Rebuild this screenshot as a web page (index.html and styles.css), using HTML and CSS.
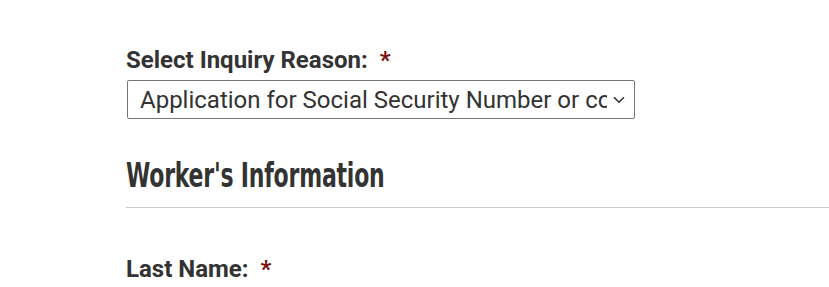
FILE: index.html
```html
<!DOCTYPE html>
<html>
<head>
<meta charset="utf-8">
<link rel="stylesheet" href="styles.css">
</head>
<body>
<div class="page">
  <div class="field">
    <label class="label">Select Inquiry Reason:<span class="req">*</span></label>
    <div class="select">
      <span class="select-text">Application for Social Security Number or co</span>
      <svg class="chev" width="12" height="8" viewBox="0 0 12 8"><path d="M1 1.2 L6 6.2 L11 1.2" fill="none" stroke="#333" stroke-width="1.6"/></svg>
    </div>
  </div>
  <h2 class="section"><span class="section-text">Worker's Information</span></h2>
  <div class="field last">
    <label class="label">Last Name:<span class="req">*</span></label>
  </div>
</div>
</body>
</html>
```
FILE: styles.css
```css
html, body { margin: 0; padding: 0; background: #fff; }
body { font-family: Roboto, "Liberation Sans", sans-serif; color: #333; overflow: hidden; }
.page { padding: 46px 0 0 126px; }
.field { display: flex; flex-direction: column; }
.label { font-weight: 700; font-size: 24px; line-height: 28px; color: #333; }
.req { color: #7a1010; margin-left: 12px; }
.select {
  margin-top: 6px; margin-left: 1px;
  width: 508px; height: 39px; box-sizing: border-box;
  border: 1px solid #767676; border-radius: 2px;
  display: flex; align-items: center; overflow: hidden;
  padding-left: 12px;
}
.select-text { font-size: 24px; line-height: 28px; white-space: nowrap; overflow: hidden; width: 467px; flex: none; color: #333; }
.chev { margin-left: 6px; flex: none; }
.section {
  margin: 36px 0 0 0; padding-bottom: 12px;
  font-family: "DejaVu Sans Condensed", "DejaVu Sans", sans-serif;
  font-weight: 700; font-size: 34px; line-height: 40px; color: #333;
  border-bottom: 1px solid #ccc;
}
.section-text { display: inline-block; transform: scaleX(0.72); transform-origin: left center; white-space: nowrap; letter-spacing: -0.3px; }
.last { margin-top: 47px; }
```
